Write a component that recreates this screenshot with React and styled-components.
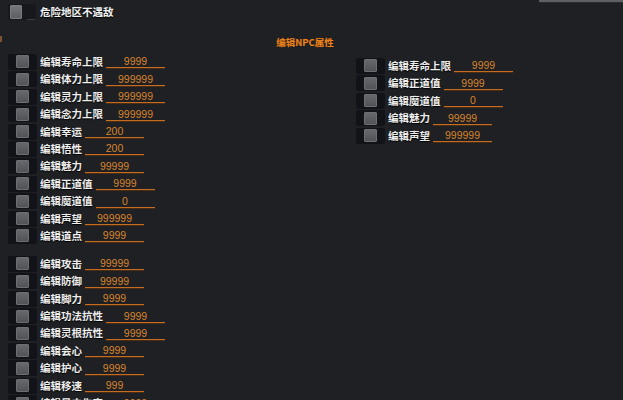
import React from "react";
import styled, { createGlobalStyle } from "styled-components";

const Global = createGlobalStyle`
  html, body {
    margin: 0;
    padding: 0;
    background: #1e2023;
    overflow: hidden;
  }
  body {
    width: 623px;
    height: 400px;
    font-family: "Noto Sans CJK SC", "Noto Sans", sans-serif;
  }
`;

const Page = styled.div`
  position: relative;
  width: 623px;
  height: 400px;
  background: #1e2023;
  overflow: hidden;
`;

const TopEdge = styled.div`
  position: absolute;
  top: 0;
  right: 0;
  width: 84px;
  height: 2px;
  background: #5e6062;
  border-bottom: 1px solid #2a2c2f;
`;

const EdgeMark = styled.div`
  position: absolute;
  left: 0;
  top: 36px;
  width: 2px;
  height: 6px;
  background: #7a5530;
`;

const TopRow = styled.div`
  display: flex;
  align-items: center;
  height: 16px;
  margin-top: 4px;
  padding-left: 8px;
`;

const Track = styled.div`
  position: relative;
  flex: none;
  width: ${(p) => (p.$off ? 28 : 29)}px;
  height: 16px;
  margin-right: ${(p) => (p.$off ? 4 : 3)}px;
  background: ${(p) => (p.$off ? "#17181c" : "#121318")};
  border-radius: 2px;
  display: flex;
  align-items: center;
  justify-content: ${(p) => (p.$off ? "flex-start" : "center")};
  padding-left: ${(p) => (p.$off ? 2 : 0)}px;
  box-sizing: border-box;
  &::after {
    content: "";
    display: ${(p) => (p.$off ? "block" : "none")};
    position: absolute;
    right: 1px;
    bottom: 0;
    width: 8px;
    height: 1px;
    background: #3c3e42;
  }
`;

const Knob = styled.div`
  width: ${(p) => (p.$off ? 12 : 13)}px;
  height: ${(p) => (p.$off ? 14 : 13)}px;
  box-sizing: border-box;
  border: 1px solid ${(p) => (p.$off ? "#7a7c80" : "#6c6e71")};
  border-radius: 1px;
  background: linear-gradient(
    to bottom,
    ${(p) => (p.$off ? "#75777a" : "#66686b")},
    ${(p) => (p.$off ? "#5d5f62" : "#515356")}
  );
`;

const TopLabel = styled.span`
  font-size: 10.5px;
  line-height: 16px;
  color: #f2f2f2;
  font-weight: 700;
  text-shadow: 0 1px 1px #000;
  white-space: nowrap;
`;

const Title = styled.div`
  height: 20px;
  line-height: 20px;
  margin-top: 12px;
  padding-right: 13px;
  text-align: center;
  font-size: 9.5px;
  font-weight: 700;
  color: #e8821f;
  text-shadow: 0 0 1px #5a2e05;
  white-space: nowrap;
`;

const Columns = styled.div`
  display: flex;
  align-items: flex-start;
`;

const Column = styled.div`
  display: flex;
  flex-direction: column;
  width: ${(p) => p.$width}px;
  padding-left: 8px;
  padding-top: ${(p) => p.$top}px;
  box-sizing: border-box;
`;

const Row = styled.div`
  display: flex;
  align-items: center;
  height: 17.4px;
  margin-top: ${(p) => (p.$gap ? 10.6 : 0)}px;
`;

const Label = styled.span`
  font-size: 10.5px;
  color: #eeeeee;
  font-weight: 700;
  text-shadow: 0 1px 1px #000;
  white-space: nowrap;
  line-height: 14px;
`;

const Field = styled.div`
  width: 59px;
  height: 11px;
  margin-left: 3px;
  margin-top: 1px;
  border-bottom: 1px solid #c46d22;
  box-shadow: 0 1px 0 #4a2c12;
  text-align: center;
  font-family: "Liberation Sans", Arial, sans-serif;
  font-size: 10.5px;
  line-height: 11px;
  color: #d9842e;
  white-space: nowrap;
`;

const left1 = [
  ["编辑寿命上限", "9999"],
  ["编辑体力上限", "999999"],
  ["编辑灵力上限", "999999"],
  ["编辑念力上限", "999999"],
  ["编辑幸运", "200"],
  ["编辑悟性", "200"],
  ["编辑魅力", "99999"],
  ["编辑正道值", "9999"],
  ["编辑魔道值", "0"],
  ["编辑声望", "999999"],
  ["编辑道点", "9999"],
];

const left2 = [
  ["编辑攻击", "99999"],
  ["编辑防御", "99999"],
  ["编辑脚力", "9999"],
  ["编辑功法抗性", "9999"],
  ["编辑灵根抗性", "9999"],
  ["编辑会心", "9999"],
  ["编辑护心", "9999"],
  ["编辑移速", "999"],
  ["编辑暴击伤害", "9999"],
];

const right = [
  ["编辑寿命上限", "9999"],
  ["编辑正道值", "9999"],
  ["编辑魔道值", "0"],
  ["编辑魅力", "99999"],
  ["编辑声望", "999999"],
];

function EditRow({ label, value, gap }) {
  return (
    <Row $gap={gap}>
      <Track>
        <Knob />
      </Track>
      <Label>{label}</Label>
      <Field>{value}</Field>
    </Row>
  );
}

export default function App() {
  return (
    <Page>
      <Global />
      <TopEdge />
      <EdgeMark />
      <TopRow>
        <Track $off>
          <Knob $off />
        </Track>
        <TopLabel>危险地区不遇敌</TopLabel>
      </TopRow>
      <Title>编辑NPC属性</Title>
      <Columns>
        <Column $width={348} $top={1.3}>
          {left1.map(([l, v]) => (
            <EditRow key={l} label={l} value={v} />
          ))}
          {left2.map(([l, v], i) => (
            <EditRow key={l} label={l} value={v} gap={i === 0} />
          ))}
        </Column>
        <Column $width={275} $top={5.3}>
          {right.map(([l, v]) => (
            <EditRow key={l} label={l} value={v} />
          ))}
        </Column>
      </Columns>
    </Page>
  );
}
